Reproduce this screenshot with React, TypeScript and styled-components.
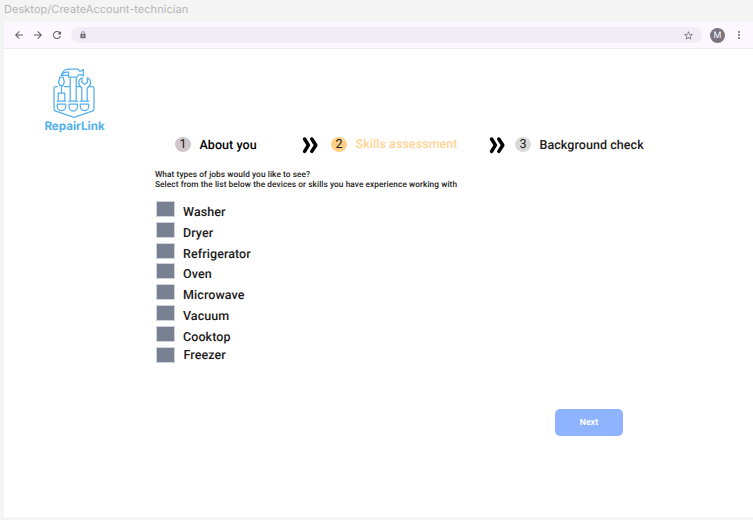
import React from "react";
import styled, { createGlobalStyle } from "styled-components";
import { MdArrowBack, MdArrowForward, MdRefresh, MdLock, MdStarBorder, MdMoreVert } from "react-icons/md";

const GlobalStyle = createGlobalStyle`
  * { box-sizing: border-box; }
  body { margin: 0; background: #f4f4f4; font-family: Roboto, sans-serif; text-rendering: geometricPrecision; }
`;

const Canvas = styled.div`
  width: 753px;
  height: 520px;
  padding-left: 4px;
  overflow: hidden;
  background: #f4f4f4;
`;

const FrameTitle = styled.div`
  height: 22px;
  line-height: 18px;
  font-family: Inter, sans-serif;
  font-size: 11px;
  letter-spacing: 0.04px;
  color: #b4b4b4;
  white-space: nowrap;
`;

const Frame = styled.div`
  height: 495px;
  background: #fff;
`;

const Toolbar = styled.div`
  display: flex;
  align-items: center;
  height: 27px;
  padding: 0 0 0 8.5px;
  background: #fdf7ff;
  border-bottom: 1px solid #ece8ee;
  color: #79747e;

  > * { flex-shrink: 0; }
`;

const NavButtons = styled.div`
  display: flex;
  gap: 7px;
  margin-right: 8.5px;
  color: #625d66;
`;

const AddressBar = styled.div`
  display: flex;
  align-items: center;
  justify-content: space-between;
  width: 631px;
  height: 16px;
  padding: 0 8px;
  border-radius: 8px;
  background: #f2ecf6;
`;

const Avatar = styled.div`
  width: 15px;
  height: 15px;
  margin: 0 8px;
  border-radius: 50%;
  background: #79747e;
  color: #fdf7ff;
  font-size: 9px;
  font-weight: 400;
  line-height: 16px;
  text-align: center;
`;

const Brand = styled.div`
  display: flex;
  flex-direction: column;
  align-items: center;
  width: 62px;
  margin: 18px 0 0 39.5px;
  color: #55b0ea;

  > svg { margin-left: -1px; }
`;

const BrandName = styled.div`
  font-family: Inter, sans-serif;
  font-size: 11.6px;
  font-weight: 700;
  line-height: 14px;
  white-space: nowrap;
`;

const Steps = styled.div`
  display: flex;
  align-items: center;
  height: 18px;
  margin: 3px 0 0 171px;
`;

const Step = styled.div<{ $width: number }>`
  display: flex;
  align-items: center;
  gap: 8.5px;
  width: ${(p) => p.$width}px;
`;

const StepNumber = styled.div<{ $color: string }>`
  width: 16px;
  height: 15px;
  margin-bottom: 2px;
  border-radius: 50%;
  background: ${(p) => p.$color};
  color: #1d1b20;
  font-size: 12.5px;
  font-weight: 400;
  line-height: 16px;
  text-align: center;
`;

const StepLabel = styled.div<{ $color?: string; $raised?: boolean }>`
  padding-top: ${(p) => (p.$raised ? 0 : 2)}px;
  color: ${(p) => p.$color ?? "#1d1b20"};
  font-size: 12.5px;
  font-weight: 500;
  line-height: 18px;
  letter-spacing: 0.06px;
  white-space: nowrap;
`;

const ArrowSlot = styled.div<{ $width: number }>`
  display: flex;
  width: ${(p) => p.$width}px;
`;

const Question = styled.div`
  margin: 16px 0 0 151px;
  color: #1d1b20;
  font-size: 8.3px;
  font-weight: 500;
  line-height: 10.4px;
  letter-spacing: 0.07px;
  white-space: nowrap;
`;

const SkillList = styled.div`
  margin: 10px 0 0 152px;
`;

const SkillRow = styled.label`
  display: flex;
  gap: 8px;
  height: 20.85px;
`;

const Box = styled.span`
  width: 19px;
  height: 16px;
  border: 0.5px solid #d0d3db;
  background: #798092;
`;

const SkillName = styled.span<{ $last: boolean }>`
  padding-top: ${(p) => (p.$last ? 0.5 : 3)}px;
  padding-left: ${(p) => (p.$last ? 0.5 : 0)}px;
  color: #1d1b20;
  font-size: 12.5px;
  font-weight: 500;
  line-height: 17px;
  letter-spacing: 0.08px;
`;

const NextButton = styled.button`
  display: block;
  width: 68px;
  height: 27px;
  margin: 41px 0 0 551px;
  padding: 0;
  border: 0;
  border-radius: 5px;
  background: #8fb4ff;
  color: #fff;
  font-family: Inter, sans-serif;
  font-size: 8px;
  font-weight: 700;
`;

const Chevrons = () => (
  <svg width="16" height="18" viewBox="0 0 16 18" fill="none" stroke="#000" strokeWidth="3.5" strokeLinecap="round" strokeLinejoin="round">
    <path d="M2.6 3 6.4 9.2l-3.8 6.2M9.8 3l4 6.2-4 6.2" />
  </svg>
);

const Logo = () => (
  <svg width="42" height="52" viewBox="0 0 42 52" fill="none" stroke="currentColor" strokeWidth="1.25" strokeLinejoin="round" strokeLinecap="round">
    <path d="M4.3 19.5H3Q1 19.5 1 21.5V41.5Q1 43.5 2.8 44.2L19.5 49.8Q21 50.3 22.5 49.8L39.2 44.2Q41 43.5 41 41.5V21.5Q41 19.5 39 19.5H37M11.5 19.5H16.8M24 19.5H27.3" />
    <path d="M8.2 8.3H15.5V5H13.5Q10.5 5 8.2 8.3ZM8.2 8.3Q10.5 2 15 2H25L26.5 4H28L30.3 2.4V9L28 7.7H26L23.8 10.2H15.5V8.3M17.2 10.2V34M23.2 10.2V34" />
    <path d="M7 10H10L11.3 15 10 18.7H7L5.6 15ZM8.5 18.7V26M5.2 26H11.8V34M5.2 26V34M4.3 34H12.7M4.3 37.1H12.7V39.5A4.2 4.2 0 0 1 4.3 39.5Z" />
    <path d="M15.8 34H24.6M16 37.1H24.4V39.8A4.2 4.2 0 0 1 16 39.8ZM27.2 34H35.8M27.3 37.1H35.7V39.5A4.2 4.2 0 0 1 27.3 39.5Z" />
    <path d="M28.8 34V21Q25.8 19 25.8 15.7Q25.8 12.2 29 10.8V15.4L31.7 17.3 34.4 15.4V10.8Q37.6 12.2 37.6 15.7Q37.6 19 34.2 21V34" />
  </svg>
);

const skills = ["Washer", "Dryer", "Refrigerator", "Oven", "Microwave", "Vacuum", "Cooktop", "Freezer"];

export default function App() {
  return (
    <>
      <GlobalStyle />
      <Canvas>
        <FrameTitle>Desktop/CreateAccount-technician</FrameTitle>
        <Frame>
          <Toolbar>
            <NavButtons>
              <MdArrowBack size={12} />
              <MdArrowForward size={12} />
              <MdRefresh size={12} />
            </NavButtons>
            <AddressBar>
              <MdLock size={8} />
              <MdStarBorder size={11} />
            </AddressBar>
            <Avatar>M</Avatar>
            <MdMoreVert size={12} />
          </Toolbar>
          <Brand>
            <Logo />
            <BrandName>RepairLink</BrandName>
          </Brand>
          <Steps>
            <Step $width={127}>
              <StepNumber $color="#cfc6c9">1</StepNumber>
              <StepLabel $color="#000">About you</StepLabel>
            </Step>
            <ArrowSlot $width={29}><Chevrons /></ArrowSlot>
            <Step $width={158}>
              <StepNumber $color="#ffcf87">2</StepNumber>
              <StepLabel $color="#ffd595" $raised>Skills assessment</StepLabel>
            </Step>
            <ArrowSlot $width={26}><Chevrons /></ArrowSlot>
            <Step $width={140}>
              <StepNumber $color="#d9d9d9">3</StepNumber>
              <StepLabel>Background check</StepLabel>
            </Step>
          </Steps>
          <Question>
            What types of jobs would you like to see?
            <br />
            Select from the list below the devices or skills you have experience working with
          </Question>
          <SkillList>
            {skills.map((skill, i) => (
              <SkillRow key={skill}>
                <Box />
                <SkillName $last={i === skills.length - 1}>{skill}</SkillName>
              </SkillRow>
            ))}
          </SkillList>
          <NextButton>Next</NextButton>
        </Frame>
      </Canvas>
    </>
  );
}
